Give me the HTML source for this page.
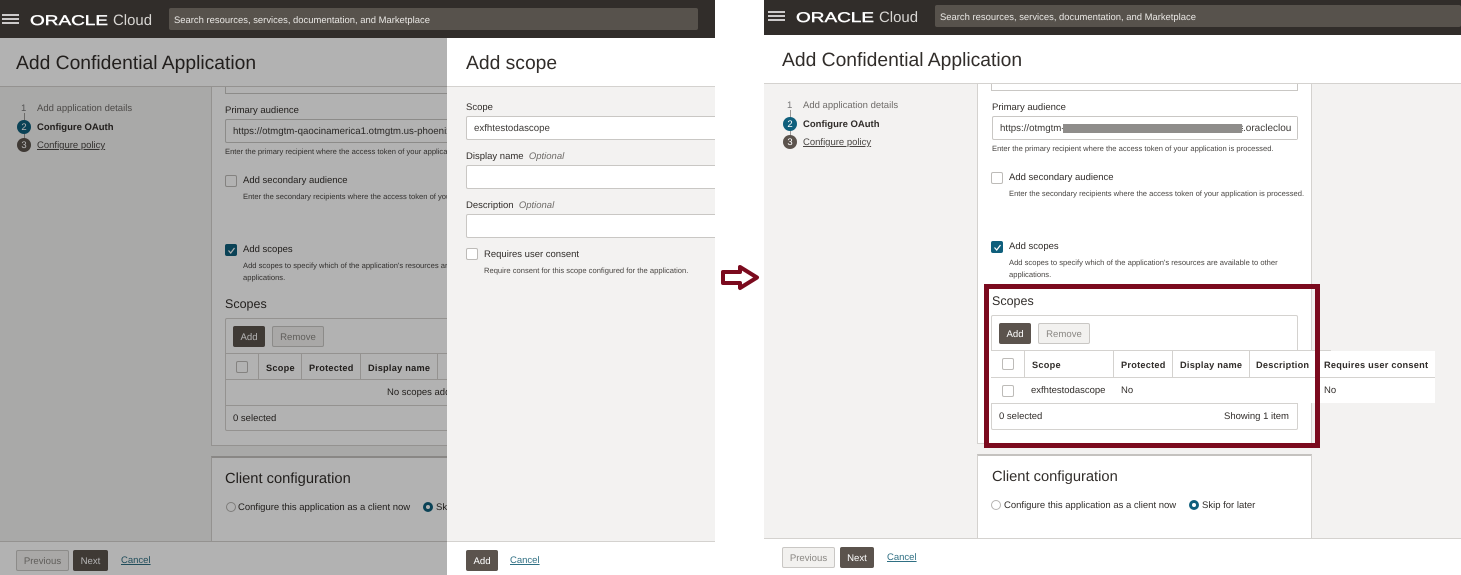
<!DOCTYPE html>
<html><head><meta charset="utf-8"><style>
html,body{margin:0;padding:0;width:1461px;height:575px;overflow:hidden;background:#fff}
body{font-family:"Liberation Sans",sans-serif;color:#312d2a;position:relative;filter:blur(.3px);text-rendering:geometricPrecision}
div,a,svg{position:absolute;box-sizing:border-box}
.t{white-space:nowrap;line-height:14px;height:14px;margin-top:-6px;font-size:9.5px}
.h{font-size:7.6px;color:#4a4744}
.b{font-weight:bold}
.th{font-weight:bold;font-size:9.2px;letter-spacing:.25px}
.lk{text-decoration:underline;color:#2f6f83}
.bar{background:#312d2a}
.sr{background:#57524c;border-radius:2px;color:#e8e6e3;font-size:9.45px;line-height:25px;padding-left:5px;white-space:nowrap}
.inp{background:#fff;border:1px solid #c9c7c4;border-radius:2px;font-size:9.7px;line-height:24px;padding-left:7px;white-space:nowrap;overflow:hidden;color:#3d3a37}
.cb{width:12px;height:12px;border:1px solid #bdbbb8;border-radius:2px;background:#fff}
.cb.on{background:#0f5f7c;border-color:#0f5f7c}
.c{border-radius:50%;width:14px;height:14px;color:#fff;font-size:9.5px;line-height:15px;text-align:center}
.btn{border-radius:2px;font-size:9.6px;text-align:center;line-height:23px;height:21px}
.pri{background:#5b534d;color:#fff}
.sec{background:#f2f1ef;border:1px solid #c9c7c4;color:#8a8783;line-height:21px}
.ln{background:#d4d2cf}
.card{background:#fff;border:1px solid #d4d2cf}
.rd{width:10px;height:10px;border-radius:50%;border:1px solid #b5b3b0;background:#fff}
.rd.on{border:3.5px solid #0f5f7c}
.ttl{font-size:19.3px;margin-top:-5.5px}
.sc{font-size:12.5px;margin-top:-7px}
</style></head><body>

<!-- LEFT PANEL -->
<div style="left:0;top:0;width:715px;height:575px;overflow:hidden;background:#f3f2f1">
  <div class="bar" style="left:0;top:0;width:715px;height:38px"></div>
  <svg style="left:2px;top:14px" width="17" height="10"><path d="M0 1H17M0 5H17M0 9H17" stroke="#fff" stroke-width="1.5"/></svg>
  <svg style="left:30px;top:10px" width="125" height="20"><text x="0" y="15" font-size="14" fill="#fff" textLength="78" lengthAdjust="spacingAndGlyphs" font-family="Liberation Sans" stroke="#fff" stroke-width=".4">ORACLE</text><text x="83" y="15" font-size="15" fill="#d8d6d3" textLength="39" lengthAdjust="spacingAndGlyphs" font-family="Liberation Sans">Cloud</text></svg>
  <div class="sr" style="left:169px;top:8px;width:529px;height:22px">Search resources, services, documentation, and Marketplace</div>

  <div style="left:0;top:38px;width:715px;height:49px;background:#fff;border-bottom:1px solid #d4d2cf"></div>
  <div class="t ttl" style="left:16px;top:62px">Add Confidential Application</div>

  <div class="t" style="left:21px;top:108px;color:#777">1</div>
  <div class="t" style="left:37px;top:108px;color:#6f6c69">Add application details</div>
  <div style="left:24px;top:113px;width:1px;height:30px;background:#9a9896"></div>
  <div class="c" style="left:17px;top:120px;background:#0f5f7c">2</div>
  <div class="t b" style="left:37px;top:127px">Configure OAuth</div>
  <div class="c" style="left:17px;top:138px;background:#5b534d">3</div>
  <div class="t" style="left:37px;top:145px;text-decoration:underline;color:#4a4744">Configure policy</div>

  <div class="card" style="left:211px;top:87px;width:334px;height:359px;border-top:0"></div>
  <div style="left:225px;top:87px;width:305px;height:7px;background:#fff;border:1px solid #c9c7c4;border-top:0"></div>
  <div class="t" style="left:225px;top:110px">Primary audience</div>
  <div class="inp" style="left:225px;top:119px;width:305px;height:24px">https://otmgtm-qaocinamerica1.otmgtm.us-phoenix-1.ocs.oraclecloud</div>
  <div class="t h" style="left:225px;top:151px">Enter the primary recipient where the access token of your application is processed.</div>
  <div class="cb" style="left:225px;top:175px"></div>
  <div class="t" style="left:243px;top:180px">Add secondary audience</div>
  <div class="t h" style="left:243px;top:196px">Enter the secondary recipients where the access token of your application is processed.</div>
  <div class="cb on" style="left:225px;top:244px"><svg style="left:1px;top:1px" width="9" height="9"><path d="M1.500 4.500L3.700 7L7.500 2" stroke="#fff" stroke-width="1.200" fill="none"/></svg></div>
  <div class="t" style="left:243px;top:249px">Add scopes</div>
  <div class="t h" style="left:243px;top:265px">Add scopes to specify which of the application's resources are available to other</div>
  <div class="t h" style="left:243px;top:277px">applications.</div>
  <div class="t sc" style="left:225px;top:304px">Scopes</div>
  <div class="card" style="left:225px;top:318px;width:305px;height:113px;border-radius:2px"></div>
  <div class="btn pri" style="left:233px;top:326px;width:32px">Add</div>
  <div class="btn sec" style="left:272px;top:326px;width:52px">Remove</div>
  <div class="ln" style="left:225px;top:353px;width:305px;height:1px"></div>
  <div class="ln" style="left:225px;top:379px;width:305px;height:1px"></div>
  <div class="ln" style="left:225px;top:405px;width:305px;height:1px"></div>
  <div class="ln" style="left:258px;top:353px;width:1px;height:26px"></div>
  <div class="ln" style="left:301px;top:353px;width:1px;height:26px"></div>
  <div class="ln" style="left:360px;top:353px;width:1px;height:26px"></div>
  <div class="ln" style="left:437px;top:353px;width:1px;height:26px"></div>
  <div class="cb" style="left:236px;top:361px"></div>
  <div class="t th" style="left:266px;top:367px">Scope</div>
  <div class="t th" style="left:309px;top:367px">Protected</div>
  <div class="t th" style="left:368px;top:367px">Display name</div>
  <div class="t" style="left:387px;top:392px">No scopes added.</div>
  <div class="t" style="left:233px;top:418px">0 selected</div>
  <div class="card" style="left:211px;top:456px;width:334px;height:90px;border-top:2px solid #c4c2bf"></div>
  <div class="t" style="left:225px;top:478px;font-size:14.7px">Client configuration</div>
  <div class="rd" style="left:226px;top:502px"></div>
  <div class="t" style="left:238px;top:507px">Configure this application as a client now</div>
  <div class="rd on" style="left:423px;top:502px"></div>
  <div class="t" style="left:436px;top:507px">Skip for later</div>

  <div style="left:0;top:541px;width:715px;height:34px;background:#fff;border-top:1px solid #d4d2cf"></div>
  <div class="btn sec" style="left:16px;top:550px;width:53px">Previous</div>
  <div class="btn pri" style="left:73px;top:550px;width:35px">Next</div>
  <div class="t lk" style="left:121px;top:560px">Cancel</div>

  <!-- scrim -->
  <div style="left:0;top:38px;width:447px;height:537px;background:rgba(0,0,0,.3)"></div>

  <!-- drawer -->
  <div style="left:447px;top:38px;width:268px;height:537px;background:#f3f2f1"></div>
  <div style="left:447px;top:38px;width:268px;height:49px;background:#fff;border-bottom:1px solid #d4d2cf"></div>
  <div class="t ttl" style="left:466px;top:62px">Add scope</div>
  <div class="t" style="left:466px;top:107px">Scope</div>
  <div class="inp" style="left:466px;top:116px;width:260px;height:24px">exfhtestodascope</div>
  <div class="t" style="left:466px;top:156px">Display name &nbsp;<i style="color:#6f6c69">Optional</i></div>
  <div class="inp" style="left:466px;top:165px;width:260px;height:24px"></div>
  <div class="t" style="left:466px;top:205px">Description &nbsp;<i style="color:#6f6c69">Optional</i></div>
  <div class="inp" style="left:466px;top:214px;width:260px;height:24px"></div>
  <div class="cb" style="left:466px;top:248px"></div>
  <div class="t" style="left:484px;top:254px">Requires user consent</div>
  <div class="t h" style="left:484px;top:270px">Require consent for this scope configured for the application.</div>
  <div style="left:447px;top:541px;width:268px;height:34px;background:#fff;border-top:1px solid #d4d2cf"></div>
  <div class="btn pri" style="left:466px;top:550px;width:32px">Add</div>
  <div class="t lk" style="left:510px;top:560px">Cancel</div>
</div>

<!-- ARROW -->
<svg style="left:720px;top:264px" width="41" height="27"><path d="M3 8H20V3L37 13.500L20 24V19H3Z" fill="#fff" stroke="#7b0a1e" stroke-width="4" stroke-linejoin="round"/></svg>

<!-- RIGHT PANEL -->
<div style="left:764px;top:0;width:697px;height:575px;overflow:hidden;background:#f3f2f1"></div>
<div class="bar" style="left:764px;top:0;width:697px;height:35px"></div>
<svg style="left:768px;top:11px" width="17" height="10"><path d="M0 1H17M0 5H17M0 9H17" stroke="#fff" stroke-width="1.5"/></svg>
<svg style="left:796px;top:7px" width="125" height="20"><text x="0" y="15" font-size="14" fill="#fff" textLength="78" lengthAdjust="spacingAndGlyphs" font-family="Liberation Sans" stroke="#fff" stroke-width=".4">ORACLE</text><text x="83" y="15" font-size="15" fill="#d8d6d3" textLength="39" lengthAdjust="spacingAndGlyphs" font-family="Liberation Sans">Cloud</text></svg>
<div class="sr" style="left:935px;top:5px;width:526px;height:22px">Search resources, services, documentation, and Marketplace</div>

<div style="left:764px;top:35px;width:697px;height:49px;background:#fff;border-bottom:1px solid #d4d2cf"></div>
<div class="t ttl" style="left:782px;top:59px">Add Confidential Application</div>

<div class="t" style="left:787px;top:105px;color:#777">1</div>
<div class="t" style="left:803px;top:105px;color:#6f6c69">Add application details</div>
<div style="left:790px;top:110px;width:1px;height:30px;background:#9a9896"></div>
<div class="c" style="left:783px;top:117px;background:#0f5f7c">2</div>
<div class="t b" style="left:803px;top:124px">Configure OAuth</div>
<div class="c" style="left:783px;top:135px;background:#5b534d">3</div>
<div class="t" style="left:803px;top:142px;text-decoration:underline;color:#4a4744">Configure policy</div>

<div class="card" style="left:977px;top:84px;width:335px;height:360px;border-top:0"></div>
<div style="left:991px;top:84px;width:307px;height:7px;background:#fff;border:1px solid #c9c7c4;border-top:0"></div>
<div class="t" style="left:992px;top:107px">Primary audience</div>
<div class="inp" style="left:992px;top:116px;width:306px;height:24px">https://otmgtm-qaocinamerica1.otmgtm.us-phoenix-1.ocs.oraclecloud</div>
<div style="left:1063px;top:124px;width:179px;height:9px;background:#8f8d8b"></div>
<div style="left:1243px;top:117px;width:54px;height:22px;background:#fff;font-size:10px;line-height:24px;overflow:hidden;white-space:nowrap;color:#3d3a37">.oracleclou</div>
<div class="t h" style="left:992px;top:148px">Enter the primary recipient where the access token of your application is processed.</div>
<div class="cb" style="left:991px;top:172px"></div>
<div class="t" style="left:1009px;top:177px">Add secondary audience</div>
<div class="t h" style="left:1009px;top:193px">Enter the secondary recipients where the access token of your application is processed.</div>
<div class="cb on" style="left:991px;top:241px"><svg style="left:1px;top:1px" width="9" height="9"><path d="M1.500 4.500L3.700 7L7.500 2" stroke="#fff" stroke-width="1.200" fill="none"/></svg></div>
<div class="t" style="left:1009px;top:246px">Add scopes</div>
<div class="t h" style="left:1009px;top:262px">Add scopes to specify which of the application's resources are available to other</div>
<div class="t h" style="left:1009px;top:274px">applications.</div>
<div class="t sc" style="left:992px;top:301px">Scopes</div>
<div class="card" style="left:991px;top:315px;width:307px;height:115px;border-radius:2px"></div>
<div class="btn pri" style="left:999px;top:323px;width:32px">Add</div>
<div class="btn sec" style="left:1038px;top:323px;width:52px">Remove</div>
<div style="left:991px;top:351px;width:444px;height:52px;background:#fff"></div>
<div class="ln" style="left:991px;top:350px;width:340px;height:1px"></div>
<div class="ln" style="left:991px;top:377px;width:444px;height:1px"></div>
<div class="ln" style="left:991px;top:403px;width:307px;height:1px"></div>
<div class="ln" style="left:1024px;top:351px;width:1px;height:26px"></div>
<div class="ln" style="left:1113px;top:351px;width:1px;height:26px"></div>
<div class="ln" style="left:1172px;top:351px;width:1px;height:26px"></div>
<div class="ln" style="left:1249px;top:351px;width:1px;height:26px"></div>
<div class="cb" style="left:1002px;top:358px"></div>
<div class="t th" style="left:1032px;top:364px">Scope</div>
<div class="t th" style="left:1121px;top:364px">Protected</div>
<div class="t th" style="left:1180px;top:364px">Display name</div>
<div class="t th" style="left:1256px;top:364px">Description</div>
<div class="t th" style="left:1324px;top:364px">Requires user consent</div>
<div class="cb" style="left:1002px;top:385px"></div>
<div class="t" style="left:1031px;top:390px">exfhtestodascope</div>
<div class="t" style="left:1121px;top:390px">No</div>
<div class="t" style="left:1324px;top:390px">No</div>
<div class="t" style="left:999px;top:416px">0 selected</div>
<div class="t" style="left:1224px;top:416px">Showing 1 item</div>
<div style="left:984px;top:284px;width:336px;height:164px;border:5px solid #7b0a1e"></div>
<div class="card" style="left:977px;top:454px;width:335px;height:90px;border-top:2px solid #c4c2bf"></div>
<div class="t" style="left:992px;top:476px;font-size:14.7px">Client configuration</div>
<div class="rd" style="left:991px;top:500px"></div>
<div class="t" style="left:1004px;top:505px">Configure this application as a client now</div>
<div class="rd on" style="left:1189px;top:500px"></div>
<div class="t" style="left:1202px;top:505px">Skip for later</div>
<div style="left:764px;top:538px;width:697px;height:37px;background:#fff;border-top:1px solid #d4d2cf"></div>
<div class="btn sec" style="left:782px;top:547px;width:53px">Previous</div>
<div class="btn pri" style="left:840px;top:547px;width:34px">Next</div>
<div class="t lk" style="left:887px;top:557px">Cancel</div>
</body></html>
